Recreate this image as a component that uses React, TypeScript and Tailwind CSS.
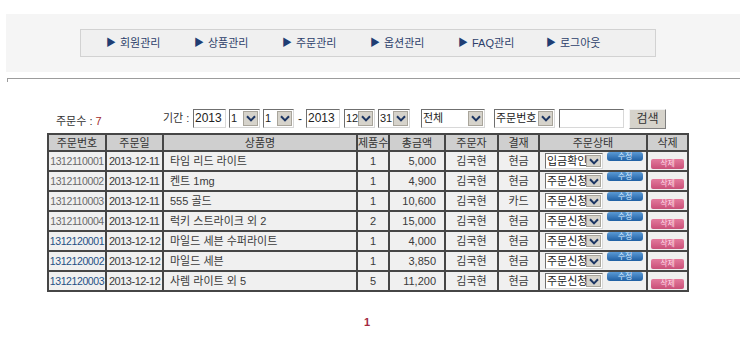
import React from "react";

const FONT = { fontFamily: '"Liberation Sans", "Noto Sans CJK KR", sans-serif' };

const menus = ["회원관리", "상품관리", "주문관리", "옵션관리", "FAQ관리", "로그아웃"];

const orders = [
  { no: "1312110001", date: "2013-12-11", name: "타임 리드 라이트", qty: 1, amt: "5,000", pay: "현금", status: "입금확인", seen: true },
  { no: "1312110002", date: "2013-12-11", name: "켄트 1mg", qty: 1, amt: "4,900", pay: "현금", status: "주문신청", seen: true },
  { no: "1312110003", date: "2013-12-11", name: "555 골드", qty: 1, amt: "10,600", pay: "카드", status: "주문신청", seen: true },
  { no: "1312110004", date: "2013-12-11", name: "럭키 스트라이크 외 2", qty: 2, amt: "15,000", pay: "현금", status: "주문신청", seen: true },
  { no: "1312120001", date: "2013-12-12", name: "마일드 세븐 수퍼라이트", qty: 1, amt: "4,000", pay: "현금", status: "주문신청", seen: false },
  { no: "1312120002", date: "2013-12-12", name: "마일드 세븐", qty: 1, amt: "3,850", pay: "현금", status: "주문신청", seen: false },
  { no: "1312120003", date: "2013-12-12", name: "사렘 라이트 외 5", qty: 5, amt: "11,200", pay: "현금", status: "주문신청", seen: false },
];

function Chevron() {
  return (
    <svg width="10" height="7" viewBox="0 0 10 7">
      <path d="M1 1.2 L5 5.4 L9 1.2" fill="none" stroke="#1c3563" strokeWidth="2" />
    </svg>
  );
}

// old windows style combo box
function FakeSelect({ className, label }: { className: string; label: string }) {
  return (
    <div
      className={`flex items-stretch border border-t-[#6f6f6f] border-l-[#6f6f6f] border-b-[#d8d8d8] border-r-[#d8d8d8] bg-white ${className}`}
    >
      <span className="flex flex-1 items-center overflow-hidden whitespace-nowrap pl-[1px] text-[11px] leading-none text-[#222]">
        {label}
      </span>
      <span className="my-[1px] mr-[1px] flex w-[15px] shrink-0 items-center justify-center border border-[#a9a59b] bg-[#d6d3cb]">
        <Chevron />
      </span>
    </div>
  );
}

function FakeInput({ className, value }: { className: string; value?: string }) {
  return (
    <div
      className={`h-[19px] border border-t-[#6f6f6f] border-l-[#6f6f6f] border-b-[#d8d8d8] border-r-[#d8d8d8] bg-white pl-[1px] text-[12px] leading-[17px] text-[#222] ${className}`}
    >
      {value}
    </div>
  );
}

const cell = "border-2 border-[#464646] p-0 leading-[14px]";

export default function App() {
  return (
    <div className="relative h-[339px] w-[740px] overflow-hidden bg-white" style={FONT}>
      {/* top menu band */}
      <div className="pt-[14px]">
        <div className="ml-[6px] h-[58px] bg-[#f5f5f5] pt-[15px]">
          <div className="ml-[74px] flex h-[28px] w-[576px] items-center border border-[#d2d2d2] bg-[#f0f0f0] pl-[25px]">
            {menus.map((m) => (
              <div key={m} className="flex w-[88px] items-center gap-[4px] text-[11px] text-[#2d3f6b]">
                <span className="text-[10px] leading-none text-[#1f3d73]">▶</span>
                <span>{m}</span>
              </div>
            ))}
          </div>
        </div>
        <div className="ml-[7px] mt-[6px] h-[4px] border-l border-t border-[#9c9c9c]" />
      </div>

      {/* search row */}
      <div className="mt-[26px] flex h-[21px] items-center text-[12px] text-[#333]">
        <div className="w-[163px] pl-[56px] pt-[5px] text-[11px]">
          주문수 : <span className="text-[#a32b2b]">7</span>
        </div>
        <div className="w-[30px] text-[11px]">기간 :</div>
        <FakeInput className="w-[33px]" value="2013" />
        <FakeSelect className="ml-[3px] h-[19px] w-[31px]" label="1" />
        <FakeSelect className="ml-[3px] h-[19px] w-[31px]" label="1" />
        <span className="ml-[4px] w-[6px]">-</span>
        <FakeInput className="ml-[2px] w-[34px]" value="2013" />
        <FakeSelect className="ml-[4px] h-[19px] w-[31px]" label="12" />
        <FakeSelect className="ml-[3px] h-[19px] w-[32px]" label="31" />
        <FakeSelect className="ml-[11px] h-[19px] w-[64px]" label="전체" />
        <FakeSelect className="ml-[9px] h-[19px] w-[61px]" label="주문번호" />
        <FakeInput className="ml-[4px] w-[65px]" />
        <div className="ml-[5px] flex h-[20px] w-[37px] items-center justify-center border border-t-[#f4f4f4] border-l-[#f4f4f4] border-b-[#808080] border-r-[#808080] bg-[#d6d3cb] text-[12px] text-[#333]">
          검색
        </div>
      </div>

      {/* order table */}
      <table className="ml-[47px] mt-[4px] w-[640px] table-fixed border-collapse text-[11px] text-[#3a3a3a]">
        <colgroup>
          <col className="w-[58px]" />
          <col className="w-[57px]" />
          <col className="w-[194px]" />
          <col className="w-[32px]" />
          <col className="w-[56px]" />
          <col className="w-[53px]" />
          <col className="w-[41px]" />
          <col className="w-[108px]" />
          <col className="w-[41px]" />
        </colgroup>
        <thead>
          <tr className="h-[17px] bg-[#cfcfcf] text-[#333]">
            {["주문번호", "주문일", "상품명", "제품수", "총금액", "주문자", "결재", "주문상태", "삭제"].map((h) => (
              <th key={h} className={`${cell} whitespace-nowrap text-center text-[11px] font-normal`}>
                {h}
              </th>
            ))}
          </tr>
        </thead>
        <tbody>
          {orders.map((o) => (
            <tr key={o.no} className="h-[20px] bg-[#f0f0f0]">
              <td
                className={`${cell} whitespace-nowrap text-center text-[10.5px] tracking-[-0.4px] ${
                  o.seen ? "text-[#6a6a6a]" : "text-[#245185]"
                }`}
              >
                {o.no}
              </td>
              <td className={`${cell} whitespace-nowrap pl-[2px] tracking-[-0.5px]`}>{o.date}</td>
              <td className={`${cell} whitespace-nowrap pl-[6px]`}>{o.name}</td>
              <td className={`${cell} text-center`}>{o.qty}</td>
              <td className={`${cell} pr-[8px] text-right`}>{o.amt}</td>
              <td className={`${cell} text-center`}>김국현</td>
              <td className={`${cell} text-center`}>{o.pay}</td>
              <td className={cell}>
                <div className="flex items-start pl-[5px]">
                  <FakeSelect className="h-[16px] w-[58px]" label={o.status} />
                  <div className="ml-[4px] -mt-[1px] flex h-[9px] w-[36px] items-center justify-center rounded-[3px] bg-gradient-to-b from-[#5a9ad6] to-[#1f5fa3] text-[8px] leading-none text-[#d8ecff]">
                    수정
                  </div>
                </div>
              </td>
              <td className={cell}>
                <div className="flex justify-center pt-[5px]">
                  <div className="flex h-[10px] w-[33px] items-center justify-center rounded-[2px] bg-gradient-to-b from-[#e27a9c] to-[#c94f78] text-[8px] leading-none text-[#ffd9e6]">
                    삭제
                  </div>
                </div>
              </td>
            </tr>
          ))}
        </tbody>
      </table>

      {/* paging */}
      <div className="mt-[22px] pl-[364px] text-[11px] font-bold text-[#a3283f]">1</div>
    </div>
  );
}
